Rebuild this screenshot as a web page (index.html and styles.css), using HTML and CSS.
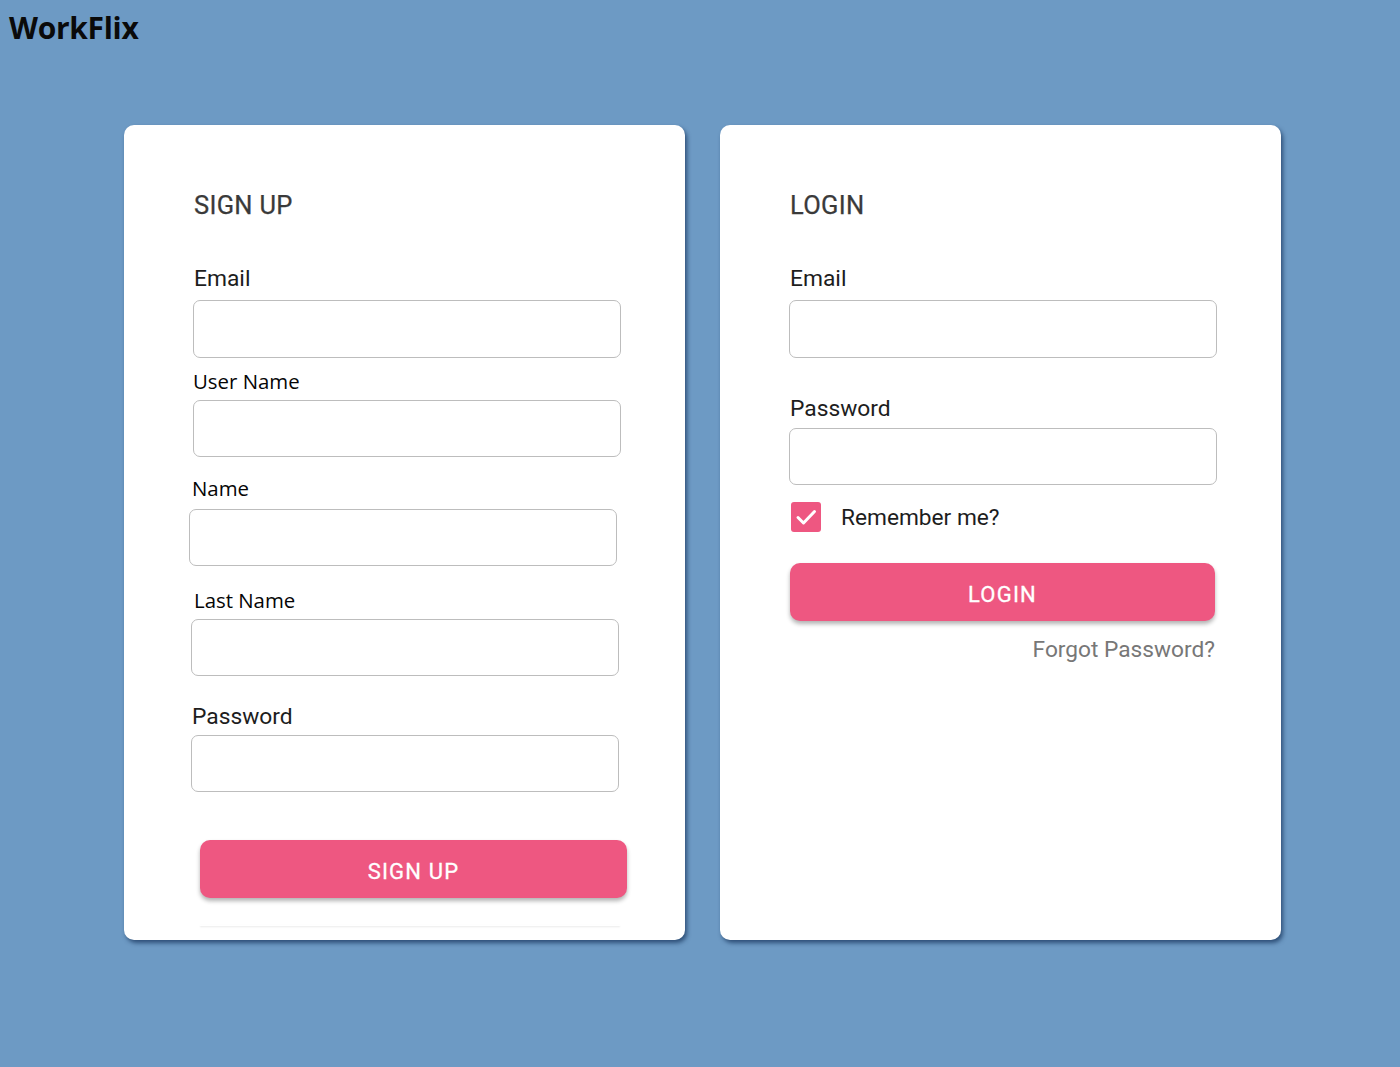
FILE: index.html
```html
<!DOCTYPE html>
<html>
<head>
<meta charset="utf-8">
<link rel="stylesheet" href="styles.css">
</head>
<body>
<div class="logo">WorkFlix</div>
<main class="cards">
  <section class="card">
    <h2 class="title">SIGN UP</h2>
    <label class="lbl lbl-roboto l-email">Email</label>
    <div class="input i-email"></div>
    <label class="lbl lbl-sans l-user">User Name</label>
    <div class="input i-user"></div>
    <label class="lbl lbl-sans l-name">Name</label>
    <div class="input i-name"></div>
    <label class="lbl lbl-sans l-last">Last Name</label>
    <div class="input i-last"></div>
    <label class="lbl lbl-roboto l-pass">Password</label>
    <div class="input i-pass"></div>
    <button class="btn btn-signup">SIGN UP</button>
    <div class="ghost"></div>
  </section>
  <section class="card">
    <h2 class="title">LOGIN</h2>
    <label class="lbl lbl-roboto l-email">Email</label>
    <div class="input li-email"></div>
    <label class="lbl lbl-roboto ll-pass">Password</label>
    <div class="input li-pass"></div>
    <div class="remember">
      <svg class="check" width="30" height="30" viewBox="0 0 30 30"><rect x="0" y="0" width="30" height="30" rx="3" fill="#ee5781"/><path d="M7 15.5 L12.5 21 L23.5 9.5" fill="none" stroke="#fff" stroke-width="3" stroke-linecap="round" stroke-linejoin="round"/></svg>
      <span>Remember me?</span>
    </div>
    <button class="btn btn-login">LOGIN</button>
    <div class="forgot">Forgot Password?</div>
  </section>
</main>
</body>
</html>
```

FILE: styles.css
```css
html, body { margin: 0; padding: 0; }
body {
  background: #6d9ac4;
  width: 1400px;
  height: 1067px;
  overflow: hidden;
  font-family: Roboto, "Liberation Sans", sans-serif;
}
.logo {
  font-family: "Open Sans", "Noto Sans", sans-serif;
  font-weight: 700;
  font-size: 30px;
  line-height: 40px;
  color: #0a0a0a;
  padding: 8px 0 0 9px;
  height: 40px;
  letter-spacing: -0.3px;
}
.cards {
  display: flex;
  gap: 35px;
  padding-left: 124px;
  margin-top: 77px;
}
.card {
  width: 561px;
  height: 815px;
  box-sizing: border-box;
  background: #fff;
  border-radius: 10px;
  box-shadow: 2px 3px 4px rgba(25, 55, 95, 0.75);
  padding: 66px 0 0 70px;
  display: flex;
  flex-direction: column;
  align-items: flex-start;
}
.title {
  margin: 0;
  font-weight: 400;
  font-size: 25.5px;
  line-height: 28px;
  color: #3a3a3a;
  letter-spacing: 0.3px;
  -webkit-text-stroke: 0.25px #3a3a3a;
}
.lbl { display: block; color: #1d1d1d; }
.lbl-roboto { font-family: Roboto, sans-serif; font-size: 22.8px; line-height: 26px; }
.lbl-sans { font-family: "Open Sans", "Noto Sans", sans-serif; font-size: 20.4px; line-height: 24px; color: #050505; }
.input {
  box-sizing: border-box;
  width: 428px;
  height: 58px;
  border: 1.5px solid #bdbdbd;
  border-radius: 7px;
  background: #fff;
}
.l-email { margin-top: 47px; }
.i-email { margin-top: 8px; margin-left: -1px; }
.l-user { margin-top: 11px; margin-left: -1px; }
.i-user { margin-top: 7px; margin-left: -1px; height: 57px; }
.l-name { margin-top: 19px; margin-left: -2px; }
.i-name { margin-top: 9px; margin-left: -5px; height: 57px; }
.l-last { margin-top: 22px; }
.i-last { margin-top: 7px; margin-left: -3px; height: 57px; }
.l-pass { margin-top: 28px; margin-left: -2px; }
.i-pass { margin-top: 5px; margin-left: -3px; height: 57px; }
.btn {
  border: none;
  background: #ee5781;
  color: #fff;
  font-family: Roboto, sans-serif;
  font-weight: 400;
  font-size: 22px;
  letter-spacing: 1.2px;
  -webkit-text-stroke: 0.3px #fff;
  height: 58px;
  border-radius: 10px;
  box-shadow: 0 3px 4px rgba(0, 0, 0, 0.3);
  padding: 5px 0 0 0;
}
.btn-signup { width: 427px; margin-top: 48px; margin-left: 6px; }
.ghost {
  width: 420px;
  height: 1px;
  margin-top: 27px;
  margin-left: 6px;
  box-shadow: 0 1px 2px rgba(0, 0, 0, 0.12);
}
.li-email { margin-top: 8px; margin-left: -1px; }
.ll-pass { margin-top: 38px; }
.li-pass { margin-top: 6px; margin-left: -1px; height: 57px; }
.remember {
  display: flex;
  align-items: center;
  margin-top: 17px;
  margin-left: 1px;
  height: 30px;
  font-size: 22.7px;
  color: #1d1d1d;
}
.check { display: block; margin-right: 20px; }
.btn-login { width: 425px; margin-top: 31px; }
.forgot {
  width: 425px;
  text-align: right;
  margin-top: 16px;
  font-size: 22.7px;
  line-height: 26px;
  color: #777;
}
```
